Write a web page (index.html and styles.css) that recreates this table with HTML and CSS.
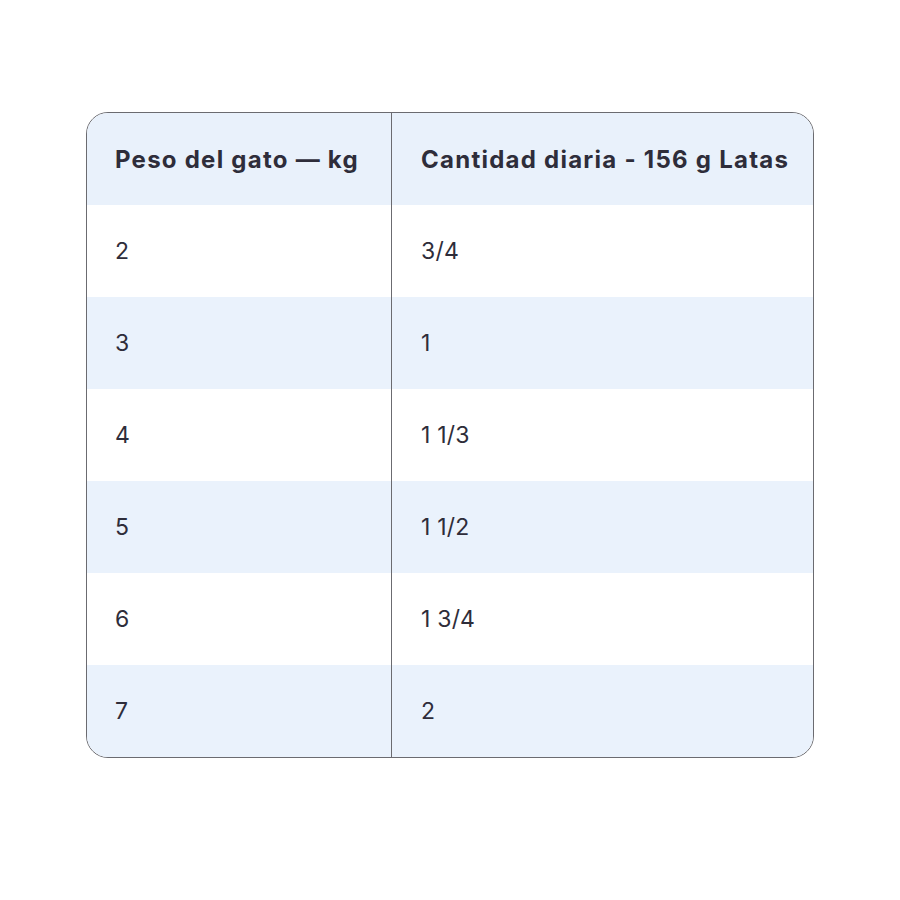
FILE: index.html
```html
<!DOCTYPE html>
<html lang="es">
<head>
<meta charset="utf-8">
<title>Tabla</title>
<link rel="stylesheet" href="styles.css">
</head>
<body>
<div class="table">
  <div class="cell head c1">Peso del gato — kg</div>
  <div class="cell head c2">Cantidad diaria - 156 g Latas</div>
  <div class="cell c1">2</div><div class="cell c2">3/4</div>
  <div class="cell c1 alt">3</div><div class="cell c2 alt">1</div>
  <div class="cell c1">4</div><div class="cell c2">1 1/3</div>
  <div class="cell c1 alt">5</div><div class="cell c2 alt">1 1/2</div>
  <div class="cell c1">6</div><div class="cell c2">1 3/4</div>
  <div class="cell c1 alt">7</div><div class="cell c2 alt">2</div>
</div>
</body>
</html>
```
FILE: styles.css
```css
html, body { margin: 0; padding: 0; background: #fff; }
body { padding: 112px 0 0 86px; }
.table {
  width: 726px;
  display: grid;
  grid-template-columns: 305px 1fr;
  grid-template-rows: 92px repeat(6, 92px);
  border: 1px solid #6b6b70;
  border-radius: 22px;
  overflow: hidden;
  font-family: Inter, "Open Sans", sans-serif;
  color: #2e2d3a;
}
.cell {
  display: flex;
  align-items: center;
  font-size: 23px;
  font-weight: 400;
  background: #fff;
  letter-spacing: 0.2px;
}
.c1 { padding-left: 28px; border-right: 1px solid #6b6b70; }
.c2 { padding-left: 29px; }
.head {
  background: #e9f1fb;
  font-weight: 700;
  font-size: 24px;
  letter-spacing: 1.25px;
}
.alt { background: #eaf2fc; }
```
